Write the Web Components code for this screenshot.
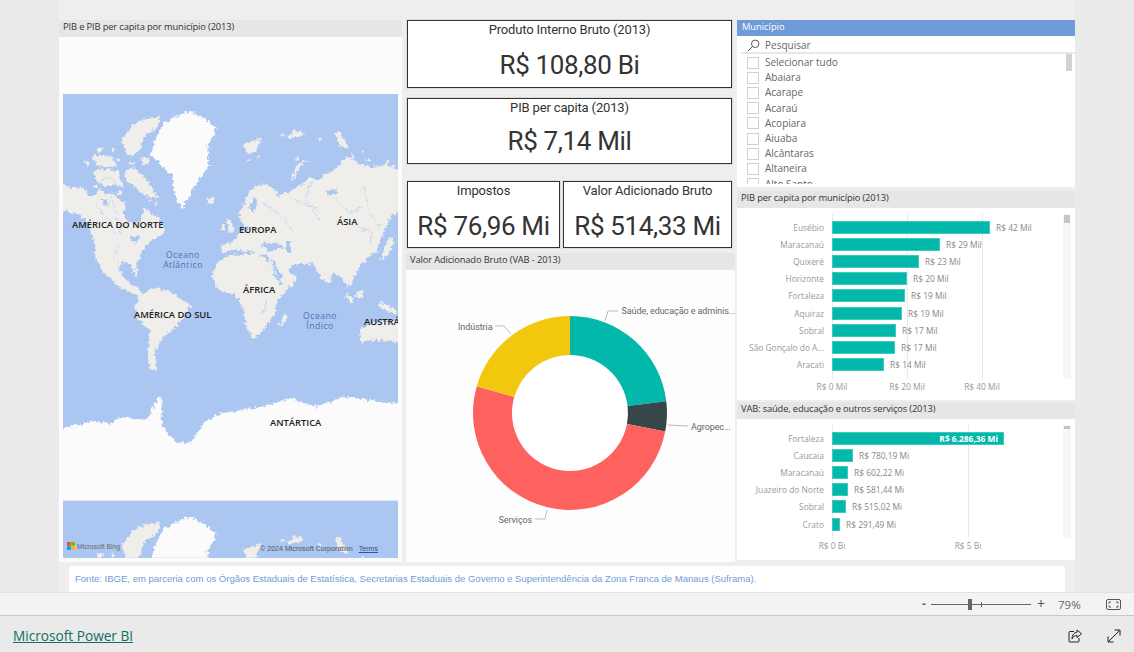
<!DOCTYPE html>
<html lang="pt">
<head>
<meta charset="utf-8">
<title>Power BI</title>
<style>
    html, body { margin: 0; height: 100%; overflow: hidden; background: #eaeaea; }
    body { font-family: "Open Sans", "Noto Sans", sans-serif; }
</style>
</head>
<body>
<pbi-report>
    <pbi-panel slot="map" title="PIB e PIB per capita por município (2013)"><world-map></world-map></pbi-panel>
    <div slot="middle">
        <kpi-card label="Produto Interno Bruto (2013)" value="R$ 108,80 Bi" style="height: 68px; --gap: 12px"></kpi-card>
        <kpi-card label="PIB per capita (2013)" value="R$ 7,14 Mil" style="height: 66px; margin-top: 10px"></kpi-card>
        <kpi-row style="margin-top: 17px">
            <kpi-card label="Impostos" value="R$ 76,96 Mi" style="width: 153px; --gap: 12px"></kpi-card>
            <kpi-card label="Valor Adicionado Bruto" value="R$ 514,33 Mi" style="width: 169px; --gap: 12px"></kpi-card>
        </kpi-row>
        <pbi-panel title="Valor Adicionado Bruto (VAB - 2013)" style="height: 309px; margin: 5px 0 0 -1px; width: 329px"><donut-chart></donut-chart></pbi-panel>
    </div>
    <div slot="right">
        <municipio-slicer></municipio-slicer>
        <pbi-panel title="PIB per capita por município (2013)" style="height: 209px; margin-top: 4px">
            <bar-chart data-chart='{"grid":[0,75,150],"axis":["R$ 0 Mil","R$ 20 Mil","R$ 40 Mil"],"thumb":8,"height":165,"rows":[["Eusébio",158,"R$ 42 Mil"],["Maracanaú",108,"R$ 29 Mil"],["Quixeré",87,"R$ 23 Mil"],["Horizonte",75,"R$ 20 Mil"],["Fortaleza",73,"R$ 19 Mil"],["Aquiraz",70,"R$ 19 Mil"],["Sobral",64,"R$ 17 Mil"],["São Gonçalo do A...",63,"R$ 17 Mil"],["Aracati",52,"R$ 14 Mil"]]}'></bar-chart>
        </pbi-panel>
        <pbi-panel title="VAB: saúde, educação e outros serviços (2013)" style="height: 158px; margin-top: 2px">
            <bar-chart data-chart='{"grid":[0,136],"axis":["R$ 0 Bi","R$ 5 Bi"],"thumb":3,"height":113,"rows":[["Fortaleza",172,"R$ 6.286,36 Mi",true],["Caucaia",21,"R$ 780,19 Mi"],["Maracanaú",16,"R$ 602,22 Mi"],["Juazeiro do Norte",16,"R$ 581,44 Mi"],["Sobral",14,"R$ 515,02 Mi"],["Crato",8,"R$ 291,49 Mi"]]}'></bar-chart>
        </pbi-panel>
    </div>
    <source-note slot="note">Fonte: IBGE, em parceria com os Órgãos Estaduais de Estatística, Secretarias Estaduais de Governo e Superintendência da Zona Franca de Manaus (Suframa).</source-note>
</pbi-report>
<zoom-bar></zoom-bar>
<brand-bar></brand-bar>

<script>
const UI_FONT = '"Open Sans", "Noto Sans", sans-serif';
const DIN_FONT = 'Roboto, "Noto Sans", sans-serif';

class PbiReport extends HTMLElement {
    constructor() {
        super();
        this.attachShadow({mode: 'open'}).innerHTML = `
            <style>
                :host { display: block; width: 1016px; height: 592px; margin-left: 59px; background: #eeeeee; box-sizing: border-box; padding-top: 20px; }
                .columns { display: grid; grid-template-columns: 343px 329px 340px; column-gap: 2px; height: 542px; }
                .note { padding: 4px 10px 0 10px; }
                ::slotted([slot="map"]) { width: 343px; height: 542px; }
                ::slotted([slot="middle"]) { margin-left: 3px; width: 325px; display: flex; flex-direction: column; }
                ::slotted([slot="right"]) { display: flex; flex-direction: column; margin-left: 2px; width: 338px; }
            </style>
            <div class="columns">
                <slot name="map"></slot>
                <slot name="middle"></slot>
                <slot name="right"></slot>
            </div>
            <div class="note"><slot name="note"></slot></div>`;
    }
}

class PbiPanel extends HTMLElement {
    constructor() {
        super();
        this.attachShadow({mode: 'open'}).innerHTML = `
            <style>
                :host { display: flex; flex-direction: column; background: #fcfcfc; box-sizing: border-box; }
                header { flex: none; height: 17px; background: #e6e6e6; color: #333; font: 9.3px/14px ${UI_FONT}; letter-spacing: -.12px; padding-left: 4px; white-space: nowrap; }
                .body { flex: 1; min-height: 0; display: flex; flex-direction: column; }
            </style>
            <header></header>
            <div class="body"><slot></slot></div>`;
        this.shadowRoot.querySelector('header').textContent = this.getAttribute('title');
        this.removeAttribute('title');
    }
}

class KpiCard extends HTMLElement {
    constructor() {
        super();
        this.attachShadow({mode: 'open'}).innerHTML = `
            <style>
                :host { display: flex; flex-direction: column; align-items: center; box-sizing: border-box; border: 1px solid #333; box-shadow: 0 0 0 1px #dcdcdc; background: #fff; color: #333; font-family: ${DIN_FONT}; white-space: nowrap; overflow: hidden; }
                .label { font-size: 13px; line-height: 17px; letter-spacing: -.15px; }
                .value { font-size: 26px; line-height: 30px; margin-top: var(--gap, 10px); letter-spacing: -.35px; }
            </style>
            <div class="label"></div>
            <div class="value"></div>`;
        this.shadowRoot.querySelector('.label').textContent = this.getAttribute('label');
        this.shadowRoot.querySelector('.value').textContent = this.getAttribute('value');
    }
}

class KpiRow extends HTMLElement {
    constructor() {
        super();
        this.attachShadow({mode: 'open'}).innerHTML = `
            <style>:host { display: flex; gap: 3px; height: 67px; }</style>
            <slot></slot>`;
    }
}

// Land shapes are in reference pixels x3, the map starts at 189,282
const LAND = [
    // north america
    'M150 560 L190 556 L215 562 L240 560 L258 574 L276 592 L300 566 L318 584 L335 578 L360 598 L378 615 L368 640 L380 660 L395 670 L425 662 L428 640 L430 620 L455 640 L470 650 L482 668 L497 692 L480 708 L462 716 L437 735 L430 752 L420 772 L408 790 L414 830 L402 822 L394 798 L378 786 L360 790 L358 810 L368 832 L385 848 L412 862 L430 888 L418 892 L385 872 L345 852 L322 828 L310 815 L296 790 L287 770 L281 722 L270 690 L262 662 L232 642 L190 634 L150 628 Z',
    // arctic islands
    'M366 425 L378 400 L400 376 L438 354 L482 350 L470 382 L432 410 L420 448 L394 468 L378 458 Z',
    'M384 506 L402 500 L424 524 L442 542 L476 592 L442 590 L418 574 L400 560 L372 530 Z',
    'M272 472 L304 464 L330 468 L352 500 L300 502 Z',
    'M278 518 L300 508 L350 510 L372 562 L338 552 L320 560 L290 544 Z',
    'M424 470 L448 478 L444 494 L426 490 Z',
    // south america
    'M418 892 L442 872 L470 860 L498 872 L520 882 L572 915 L552 948 L530 980 L500 1000 L482 1020 L468 1050 L466 1080 L470 1115 L450 1108 L444 1060 L446 1030 L450 990 L430 972 L412 950 L406 918 Z',
    // africa
    'M636 830 L642 808 L652 788 L690 765 L730 764 L760 760 L790 772 L810 790 L826 830 L840 852 L866 862 L848 884 L832 900 L826 934 L806 970 L782 1000 L760 1015 L748 996 L736 970 L732 940 L725 912 L700 880 L672 878 L652 868 Z',
    'M855 940 L862 950 L846 980 L838 972 Z',
    // eurasia
    'M660 755 L664 736 L690 730 L706 718 L716 700 L748 688 L726 672 L716 640 L736 600 L750 572 L772 556 L800 552 L830 574 L832 592 L870 572 L900 556 L932 532 L950 540 L1000 512 L1040 470 L1075 490 L1112 502 L1160 494 L1240 532 L1240 642 L1190 636 L1166 660 L1150 702 L1138 730 L1130 752 L1108 770 L1086 790 L1072 812 L1062 832 L1052 856 L1040 862 L1034 846 L1022 830 L1000 822 L985 852 L966 838 L950 812 L940 790 L912 792 L882 792 L862 812 L892 830 L872 862 L850 856 L830 826 L804 782 L800 762 L768 768 L760 752 L735 754 L705 748 L668 760 Z',
    // islands and isles
    'M620 600 L640 592 L646 605 L626 612 Z',
    'M730 430 L782 415 L776 445 L750 466 L735 450 Z',
    'M875 542 L885 500 L925 474 L902 496 L886 532 Z',
    'M860 405 L905 390 L912 405 L870 416 Z',
    'M1005 400 L1020 395 L1046 446 L1020 440 Z',
    'M680 655 L692 660 L704 690 L682 702 Z',
    'M664 672 L676 672 L674 690 L662 690 Z',
    'M1160 725 L1176 705 L1182 730 L1158 772 L1140 782 L1150 755 Z',
    'M1040 878 L1062 900 L1054 908 L1034 890 Z',
    'M1068 880 L1090 872 L1088 895 L1070 895 Z',
    'M1140 905 L1190 930 L1190 942 L1140 925 Z',
    // australia
    'M1080 990 L1112 968 L1240 958 L1240 1032 L1132 1020 L1084 1028 Z'
];
const ICE = [
    // greenland
    'M570 334 L612 355 L650 385 L622 440 L626 500 L590 550 L546 626 L526 590 L516 530 L450 462 L470 410 L490 370 L540 345 Z',
    // antarctica
    'M150 1295 L265 1265 L340 1270 L350 1250 L440 1260 L470 1200 L485 1190 L485 1280 L530 1325 L570 1330 L610 1270 L660 1240 L790 1220 L870 1195 L950 1220 L1030 1190 L1240 1215 L1240 1520 L150 1520 Z'
];
const WATER = [
    'M378 626 L402 625 L424 650 L396 664 Z',
    'M305 600 L320 596 L330 610 L312 612 Z',
    'M392 712 L420 706 L412 728 L396 726 Z',
    'M980 572 L1010 568 L1012 584 L984 586 Z',
    'M748 622 L760 590 L772 600 L762 640 Z',
    'M780 732 L830 728 L856 744 L806 752 Z',
    'M858 722 L872 724 L874 760 L860 756 Z',
    'M812 782 L820 780 L848 836 L838 838 Z'
];
// rivers and channels, drawn thin in the water colour
const CHANNELS = [
    'M300 540 L340 535 L365 580', 'M330 590 L350 640 L360 700', 'M280 610 L320 650 L345 700',
    'M880 600 L930 620 L960 660', 'M935 540 L915 600 L965 640', 'M1000 590 L1050 640 L1090 620',
    'M1090 560 L1110 640 L1140 680', 'M790 610 L850 650 L880 700', 'M1070 680 L1120 700 L1110 730',
    'M360 730 L340 780', 'M800 900 L790 940', 'M470 950 L510 945'
];
// small arctic islets, x y r
const ISLES = [
    [300, 450, 8], [340, 450, 7], [355, 480, 6], [395, 490, 7], [262, 490, 6], [290, 560, 6], [358, 580, 6],
    [450, 602, 5], [470, 612, 5], [852, 405, 5], [880, 395, 4], [960, 420, 4], [1060, 470, 7], [1160, 490, 7],
    [1180, 498, 5], [775, 470, 4], [748, 480, 4], [1105, 480, 5], [1090, 455, 4], [892, 478, 5]
];

class WorldMap extends HTMLElement {
    constructor() {
        super();
        const paths = (list) => list.map((d) => `<path d="${d}"/>`).join('');
        this.attachShadow({mode: 'open'}).innerHTML = `
            <style>
                :host { display: block; position: relative; width: 335px; height: 464px; margin: auto 4px 4px 4px; overflow: hidden; font-family: ${UI_FONT}; flex: none; }
                svg { display: block; }
                .place { position: absolute; transform: translateY(-50%); font-size: 9.4px; line-height: 10px; font-weight: 600; color: #222; white-space: nowrap; }
                .ocean { position: absolute; transform: translateX(-50%); text-align: center; font-size: 8.6px; line-height: 9.6px; letter-spacing: .5px; color: #5470b5; white-space: nowrap; }
                .bing { position: absolute; left: 4px; bottom: 8px; display: flex; align-items: center; gap: 2px; font: 6.8px "Liberation Sans", sans-serif; color: #666; }
                .credit { position: absolute; left: 197px; bottom: 5px; font: 7.1px "Liberation Sans", sans-serif; color: #555; white-space: nowrap; }
                .credit u { margin-left: 6px; color: #3c4f95; }
            </style>
            <svg width="335" height="464" viewBox="189 282 1005 1392">
                <defs>
                    <filter id="rough" filterUnits="userSpaceOnUse" x="100" y="250" width="1200" height="1320">
                        <feTurbulence type="fractalNoise" baseFrequency=".1" numOctaves="4" seed="4"/>
                        <feDisplacementMap in="SourceGraphic" scale="20" xChannelSelector="R" yChannelSelector="G"/>
                    </filter>
                    <clipPath id="strip"><rect x="189" y="1503" width="1005" height="170"/></clipPath>
                    <g id="world" filter="url(#rough)">
                        <g fill="#efeeeb">${paths(LAND)}${ISLES.map(([x, y, r]) => `<circle cx="${x}" cy="${y}" r="${r}"/>`).join('')}</g>
                        <g fill="#aac6f1">${paths(WATER)}</g>
                        <g fill="none" stroke="#c6d6ee" stroke-width="3">${paths(CHANNELS)}</g>
                        <g fill="#fbfbfb">${paths(ICE)}</g>
                    </g>
                </defs>
                <rect x="189" y="282" width="1005" height="1392" fill="#aac6f1"/>
                <use href="#world"/>
                <rect x="189" y="1502" width="1005" height="172" fill="#aac6f1"/>
                <g clip-path="url(#strip)"><use href="#world" transform="translate(0 1217)"/></g>
            </svg>
            ${MAP_LABELS_HTML()}
            <span class="ocean" style="left:120px;top:157px">Oceano<br>Atlântico</span>
            <span class="ocean" style="left:257px;top:218px">Oceano<br>Índico</span>
            <div class="bing">
                <svg width="8" height="8" viewBox="0 0 8 8"><rect width="3.8" height="3.8" fill="#f25022"/><rect x="4.2" width="3.8" height="3.8" fill="#7fba00"/><rect y="4.2" width="3.8" height="3.8" fill="#00a4ef"/><rect x="4.2" y="4.2" width="3.8" height="3.8" fill="#ffb900"/></svg>
                <span>Microsoft Bing</span>
            </div>
            <div class="credit">© 2024 Microsoft Corporation<u>Terms</u></div>`;
    }
}

function MAP_LABELS_HTML() {
    const places = [
        ['AMÉRICA DO NORTE', 9, 131], ['EUROPA', 176, 136], ['ÁSIA', 274, 128], ['ÁFRICA', 180, 196],
        ['AMÉRICA DO SUL', 71, 221], ['AUSTRÁLIA', 301, 228], ['ANTÁRTICA', 207, 329]
    ];
    return places.map(([t, x, y]) => `<span class="place" style="left:${x}px;top:${y}px">${t}</span>`).join('');
}

class DonutChart extends HTMLElement {
    constructor() {
        super();
        const cx = 164, cy = 143, r1 = 97, r0 = 58;
        const pt = (r, a) => {
            const t = (a - 90) * Math.PI / 180;
            return `${(cx + r * Math.cos(t)).toFixed(2)} ${(cy + r * Math.sin(t)).toFixed(2)}`;
        };
        const arc = (a, b, color) => {
            const large = b - a > 180 ? 1 : 0;
            return `<path fill="${color}" d="M${pt(r1, a)} A${r1} ${r1} 0 ${large} 1 ${pt(r1, b)} L${pt(r0, b)} A${r0} ${r0} 0 ${large} 0 ${pt(r0, a)} Z"/>`;
        };
        this.attachShadow({mode: 'open'}).innerHTML = `
            <style>
                :host { display: block; flex: 1; background: #fdfdfd; }
                svg { display: block; }
                text { font: 9px ${DIN_FONT}; letter-spacing: -.08px; fill: #666; }
                polyline { fill: none; stroke: #bbb; stroke-width: 1; }
                .ring { fill: #fff; }
            </style>
            <svg width="329" height="292" viewBox="0 0 329 292">
                <circle class="ring" cx="${cx}" cy="${cy}" r="${r0}"/>
                ${arc(0, 83, '#01b8aa')}
                ${arc(83, 101, '#374649')}
                ${arc(101, 286, '#fd625e')}
                ${arc(286, 360, '#f2c80f')}
                <polyline points="199,51 202,41 212,41"/>
                <polyline points="262,155 282,156"/>
                <polyline points="141,240 139,249 129,249"/>
                <polyline points="105,64 98,56 89,56"/>
                <text x="215.500" y="44">Saúde, educação e adminis...</text>
                <text x="285" y="159.500">Agropec...</text>
                <text x="92.500" y="252.500">Serviços</text>
                <text x="52" y="59.500">Indústria</text>
            </svg>`;
    }
}

class MunicipioSlicer extends HTMLElement {
    constructor() {
        super();
        const names = ['Selecionar tudo', 'Abaiara', 'Acarape', 'Acaraú', 'Acopiara', 'Aiuaba', 'Alcântaras', 'Altaneira', 'Alto Santo'];
        this.attachShadow({mode: 'open'}).innerHTML = `
            <style>
                :host { display: block; height: 167px; background: #fff; font-family: ${UI_FONT}; flex: none; }
                header { height: 16px; background: #6f9bd8; color: #fff; font-size: 9.3px; line-height: 14px; padding-left: 5px; }
                .search { height: 18px; box-sizing: border-box; padding-top: 2px; margin-left: 4px; border-bottom: 2px solid #e8e8e8; display: flex; align-items: center; gap: 5px; padding-left: 6px; color: #666; font-size: 10px; }
                .search svg { flex: none; }
                .list { position: relative; height: 130px; overflow: hidden; }
                ul { list-style: none; margin: 0; padding: 1px 0 0 10px; }
                li { height: 15.200px; display: flex; align-items: center; gap: 6px; color: #666; font-size: 10px; line-height: 15px; }
                i { flex: none; box-sizing: border-box; width: 12px; height: 12px; border: 1px solid #d4d0d0; background: #fff; }
                .thumb { position: absolute; top: 0; right: 3px; width: 6px; height: 17px; background: #d2d2d2; }
            </style>
            <header>Município</header>
            <div class="search">
                <svg width="13" height="13" viewBox="0 0 13 13" fill="none" stroke="#555"><circle cx="8.200" cy="4.800" r="3.700"/><path d="M5.500 7.500 L1 12"/></svg>
                <span>Pesquisar</span>
            </div>
            <div class="list">
                <ul>${names.map((n) => `<li><i></i><span>${n}</span></li>`).join('')}</ul>
                <div class="thumb"></div>
            </div>`;
    }
}

class BarChart extends HTMLElement {
    connectedCallback() {
        const data = JSON.parse(this.getAttribute('data-chart'));
        const root = this.shadowRoot || this.attachShadow({mode: 'open'});
        root.innerHTML = `
            <style>
                :host { display: grid; grid-template-columns: 326px 8px; font: 8.400px ${UI_FONT}; color: #888; background: #fff; flex: 1; padding-top: 6px; box-sizing: border-box; }
                .plot { position: relative; height: ${data.height}px; }
                .line { position: absolute; top: 0; bottom: 0; width: 1px; background: #e9e9e9; }
                .rows { position: relative; padding-top: 5px; }
                .row { display: flex; align-items: center; height: 17.100px; white-space: nowrap; }
                .name { flex: none; width: 87px; margin-right: 8px; text-align: right; color: #999; }
                .bar { flex: none; box-sizing: border-box; height: 13px; background: #01b8aa; border: 1px solid #3fcabf; text-align: right; padding-right: 5px; line-height: 11px; color: #fff; font-weight: 700; }
                .val { margin-left: 6px; }
                .axis { position: relative; height: 16px; line-height: 16px; color: #999; }
                .axis span { position: absolute; transform: translateX(-50%); white-space: nowrap; }
                .track { height: ${data.height}px; background: #f6f6f6; }
                .thumb { height: ${data.thumb}px; margin: 1px 1px 0; background: #c4c4c4; }
            </style>
            <div>
                <div class="plot">
                    ${data.grid.map((x) => `<div class="line" style="left:${95 + x}px"></div>`).join('')}
                    <div class="rows">
                        ${data.rows.map(([name, w, val, inside]) => `
                            <div class="row">
                                <span class="name">${name}</span>
                                <span class="bar" style="width:${w}px">${inside ? val : ''}</span>
                                ${inside ? '' : `<span class="val">${val}</span>`}
                            </div>`).join('')}
                    </div>
                </div>
                <div class="axis">${data.axis.map((t, i) => `<span style="left:${95 + data.grid[i]}px">${t}</span>`).join('')}</div>
            </div>
            <div class="track"><div class="thumb"></div></div>`;
    }
}

class SourceNote extends HTMLElement {
    constructor() {
        super();
        this.attachShadow({mode: 'open'}).innerHTML = `
            <style>
                :host { display: block; height: 26px; box-sizing: border-box; background: #fff; border-radius: 3px 3px 0 0; padding-left: 6px; color: #6f9bd8; font: 9.530px/25px "Liberation Sans", sans-serif; white-space: nowrap; }
            </style>
            <slot></slot>`;
    }
}

class ZoomBar extends HTMLElement {
    constructor() {
        super();
        this.attachShadow({mode: 'open'}).innerHTML = `
            <style>
                :host { display: flex; align-items: center; height: 24px; box-sizing: border-box; background: #f3f3f3; border-top: 1px solid #e2e2e2; border-bottom: 1px solid #c8c8c8; padding-left: 922px; color: #666; font: 12px ${UI_FONT}; }
                .minus { width: 9px; font-weight: 700; line-height: 20px; }
                .slider { position: relative; width: 100px; height: 1px; background: #666; }
                .slider b { position: absolute; left: 37px; top: -5px; width: 4px; height: 11px; background: #666; }
                .slider s { position: absolute; left: 50px; top: -2px; width: 1px; height: 5px; background: #666; }
                .plus { margin-left: 6px; width: 21px; font-size: 14px; color: #555; line-height: 20px; }
                .pct { width: 48px; font-size: 11.500px; }
            </style>
            <span class="minus">-</span>
            <div class="slider"><b></b><s></s></div>
            <span class="plus">+</span>
            <span class="pct">79%</span>
            <svg width="15" height="11" viewBox="0 0 15 11" fill="none" stroke="#555"><rect x=".5" y=".5" width="14" height="10" rx="1.500"/><path d="M3 4.500 V3 H5 M10 3 H12 V4.500 M3 6.500 V8 H5 M10 8 H12 V6.500"/></svg>`;
    }
}

class BrandBar extends HTMLElement {
    constructor() {
        super();
        this.attachShadow({mode: 'open'}).innerHTML = `
            <style>
                :host { display: flex; align-items: center; height: 36px; background: #eaeaea; position: relative; font-family: ${UI_FONT}; }
                a { margin-left: 13px; color: #0f6f60; font-size: 13.650px; text-decoration: underline; line-height: 18px; margin-top: 4px; }
                .icons { margin-left: auto; margin-right: 13px; display: flex; align-items: center; gap: 25px; margin-top: 4px; }
                svg { display: block; }
            </style>
            <a href="#">Microsoft Power BI</a>
            <div class="icons">
                <svg width="14" height="14" viewBox="0 0 14 14" fill="none" stroke="#222"><path d="M6 2.500 H2 A1 1 0 0 0 1 3.500 V12 A1 1 0 0 0 2 13 H10 A1 1 0 0 0 11 12 V9"/><path d="M9 1 L13.500 4.800 L9 8.500 V6.500 C6.500 6.500 5 7.500 4 10 C4 6 6 3.500 9 3.200 Z"/></svg>
                <svg width="14" height="14" viewBox="0 0 14 14" fill="none" stroke="#222"><path d="M1.500 12.500 L12.500 1.500 M7.500 1 H13 V6.500 M1 7.500 V13 H6.500"/></svg>
            </div>`;
    }
}

customElements.define('pbi-report', PbiReport);
customElements.define('pbi-panel', PbiPanel);
customElements.define('kpi-card', KpiCard);
customElements.define('kpi-row', KpiRow);
customElements.define('world-map', WorldMap);
customElements.define('donut-chart', DonutChart);
customElements.define('municipio-slicer', MunicipioSlicer);
customElements.define('bar-chart', BarChart);
customElements.define('source-note', SourceNote);
customElements.define('zoom-bar', ZoomBar);
customElements.define('brand-bar', BrandBar);
</script>
</body>
</html>
